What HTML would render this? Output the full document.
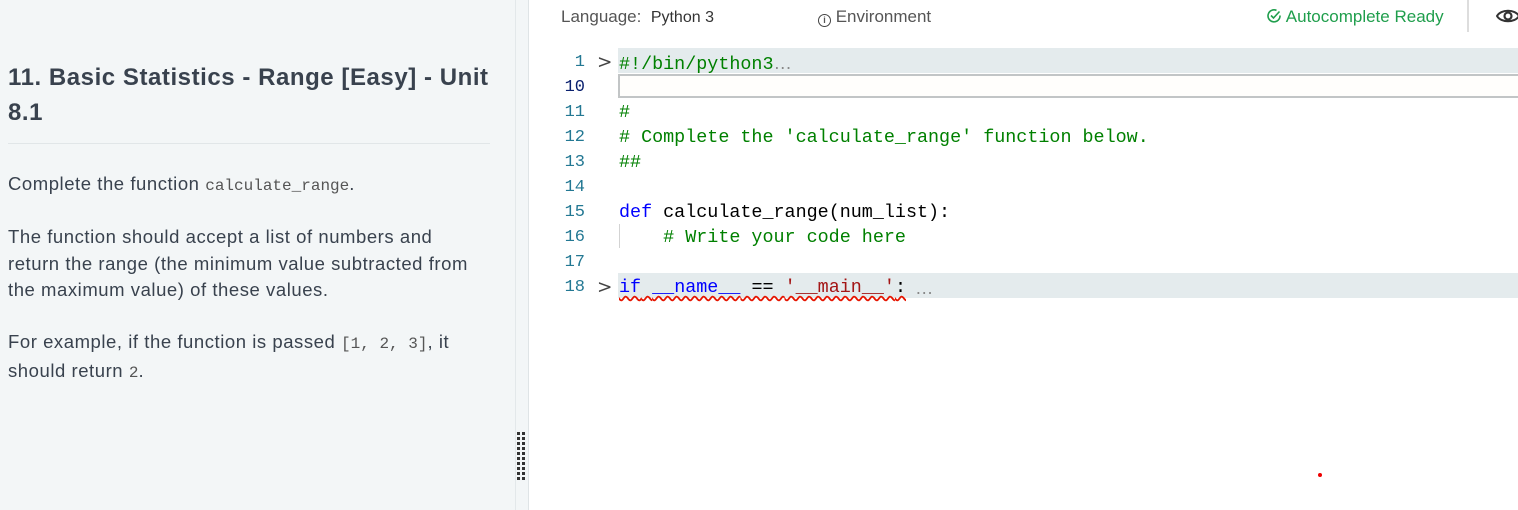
<!DOCTYPE html>
<html><head><meta charset="utf-8"><style>
*{margin:0;padding:0;box-sizing:border-box}
body{width:1518px;height:510px;overflow:hidden;background:#fff;font-family:"Liberation Sans",sans-serif;position:relative}
.left{position:absolute;left:0;top:0;width:515px;height:510px;background:#f3f6f7}
.split{position:absolute;left:515px;top:0;width:14px;height:510px;background:#f3f6f7;border-left:1px solid #e3e8ea;border-right:1px solid #dfe4e6}
h1{position:absolute;left:8px;top:60px;width:500px;font-size:24px;line-height:35px;font-weight:bold;color:#39424e;letter-spacing:0.55px;white-space:nowrap}
.hr{position:absolute;left:8px;top:143px;width:482px;height:1px;background:#e1e6e8}
.p{position:absolute;left:8px;font-size:18.5px;line-height:26.5px;color:#39424e;letter-spacing:0.55px;white-space:nowrap}
code{font-family:"Liberation Mono",monospace;font-size:16px;color:#555;letter-spacing:0}
.top{position:absolute;top:0;height:32px;font-size:17px;color:#555}
.code{position:absolute;left:529px;top:48px;right:0;font-family:"Liberation Mono",monospace;font-size:18.4px}
.ln{position:absolute;height:25px;line-height:25px;width:1000px}
.tx{padding-top:2px}
.num{position:absolute;left:0;width:56px;text-align:right;color:#237893;font-size:17px}
.t{position:absolute;left:90px;white-space:pre}
.c{color:#008000}.k{color:#0000ff}.s{color:#a31515}
</style></head><body>
<div class="left"></div>
<div class="split"><div style="position:absolute;left:1px;top:432px;width:10px;height:48px;background:repeating-linear-gradient(#333 0 3px,transparent 3px 5px);-webkit-mask:repeating-linear-gradient(90deg,#000 0 3px,transparent 3px 5px)"></div></div>
<h1>11. Basic Statistics - Range [Easy] - Unit<br>8.1</h1>
<div class="hr"></div>
<div class="p" style="top:171px">Complete the function <code>calculate_range</code>.</div>
<div class="p" style="top:224px">The function should accept a list of numbers and<br>return the range (the minimum value subtracted from<br>the maximum value) of these values.</div>
<div class="p" style="top:329px">For example, if the function is passed <code>[1, 2, 3]</code>, it<br>should return <code>2</code>.</div>

<div class="top" style="left:561px;top:7px">Language:&nbsp; <span style="font-size:16px;color:#333">Python 3</span></div>
<div class="top" style="left:818px;top:7px"><span style="display:inline-block;width:13px;height:13px;border:1.5px solid #444;border-radius:50%;font-size:9px;line-height:10px;text-align:center;vertical-align:-1px;font-weight:bold">i</span> Environment</div>
<div class="top" style="left:1266px;top:7px;color:#1f9e4c"><svg width="16" height="16" viewBox="0 0 16 16" style="vertical-align:-2px"><path d="M14 7.5A6 6 0 1 1 10.5 2.4" fill="none" stroke="#1f9e4c" stroke-width="1.6"/><path d="M5 7.5l2.5 2.5 6-6.5" fill="none" stroke="#1f9e4c" stroke-width="1.6"/></svg> Autocomplete Ready</div>
<div style="position:absolute;left:1467px;top:0;width:2px;height:32px;background:#ddd"></div>
<svg style="position:absolute;left:1496px;top:6px" width="24" height="20" viewBox="0 0 24 20"><path d="M1 10C5 3 19 3 23 10C19 17 5 17 1 10Z" fill="none" stroke="#333" stroke-width="2"/><circle cx="12" cy="10" r="3.5" fill="none" stroke="#333" stroke-width="2.2"/></svg>

<div class="code">
<div class="ln" style="top:0;left:0;width:989px"><div style="position:absolute;left:89px;right:0;top:0;height:25px;background:#e4ebed"></div></div>
<div class="ln tx" style="top:0"><span class="num">1</span><span style="position:absolute;left:68px;color:#444;font-family:'DejaVu Sans'">&gt;</span><span class="t c">#!/bin/python3<span style="color:#888;font-family:'Liberation Sans'">…</span></span></div>
<div style="position:absolute;left:89px;right:0;top:26px;height:24px;border:2px solid #c2c5c6;border-right:none;background:#fffefc"></div>
<div class="ln tx" style="top:25px"><span class="num" style="color:#0b216f">10</span></div>
<div class="ln tx" style="top:50px"><span class="num">11</span><span class="t c">#</span></div>
<div class="ln tx" style="top:75px"><span class="num">12</span><span class="t c"># Complete the 'calculate_range' function below.</span></div>
<div class="ln tx" style="top:100px"><span class="num">13</span><span class="t c">##</span></div>
<div class="ln tx" style="top:125px"><span class="num">14</span></div>
<div class="ln tx" style="top:150px"><span class="num">15</span><span class="t"><span class="k">def</span> calculate_range(num_list):</span></div>
<div class="ln" style="top:175px"><span style="position:absolute;left:90px;top:1px;width:1px;height:24px;background:#d3d3d3"></span></div>
<div class="ln tx" style="top:175px"><span class="num">16</span><span class="t c">    # Write your code here</span></div>
<div class="ln tx" style="top:200px"><span class="num">17</span></div>
<div class="ln" style="top:225px;left:0;width:989px"><div style="position:absolute;left:89px;right:0;top:0;height:25px;background:#e4ebed"></div></div>
<div class="ln tx" style="top:225px"><span class="num">18</span><span style="position:absolute;left:68px;color:#444;font-family:'DejaVu Sans'">&gt;</span><span class="t" style="text-decoration:underline wavy #e51400;text-underline-offset:3px"><span class="k">if</span> <span class="k">__name__</span> == <span class="s">'__main__'</span>:</span><span style="position:absolute;left:386px;color:#888;font-family:'Liberation Sans'">…</span></div>
</div>
<div style="position:absolute;left:1318px;top:473px;width:4px;height:4px;border-radius:50%;background:#e00"></div>
</body></html>
